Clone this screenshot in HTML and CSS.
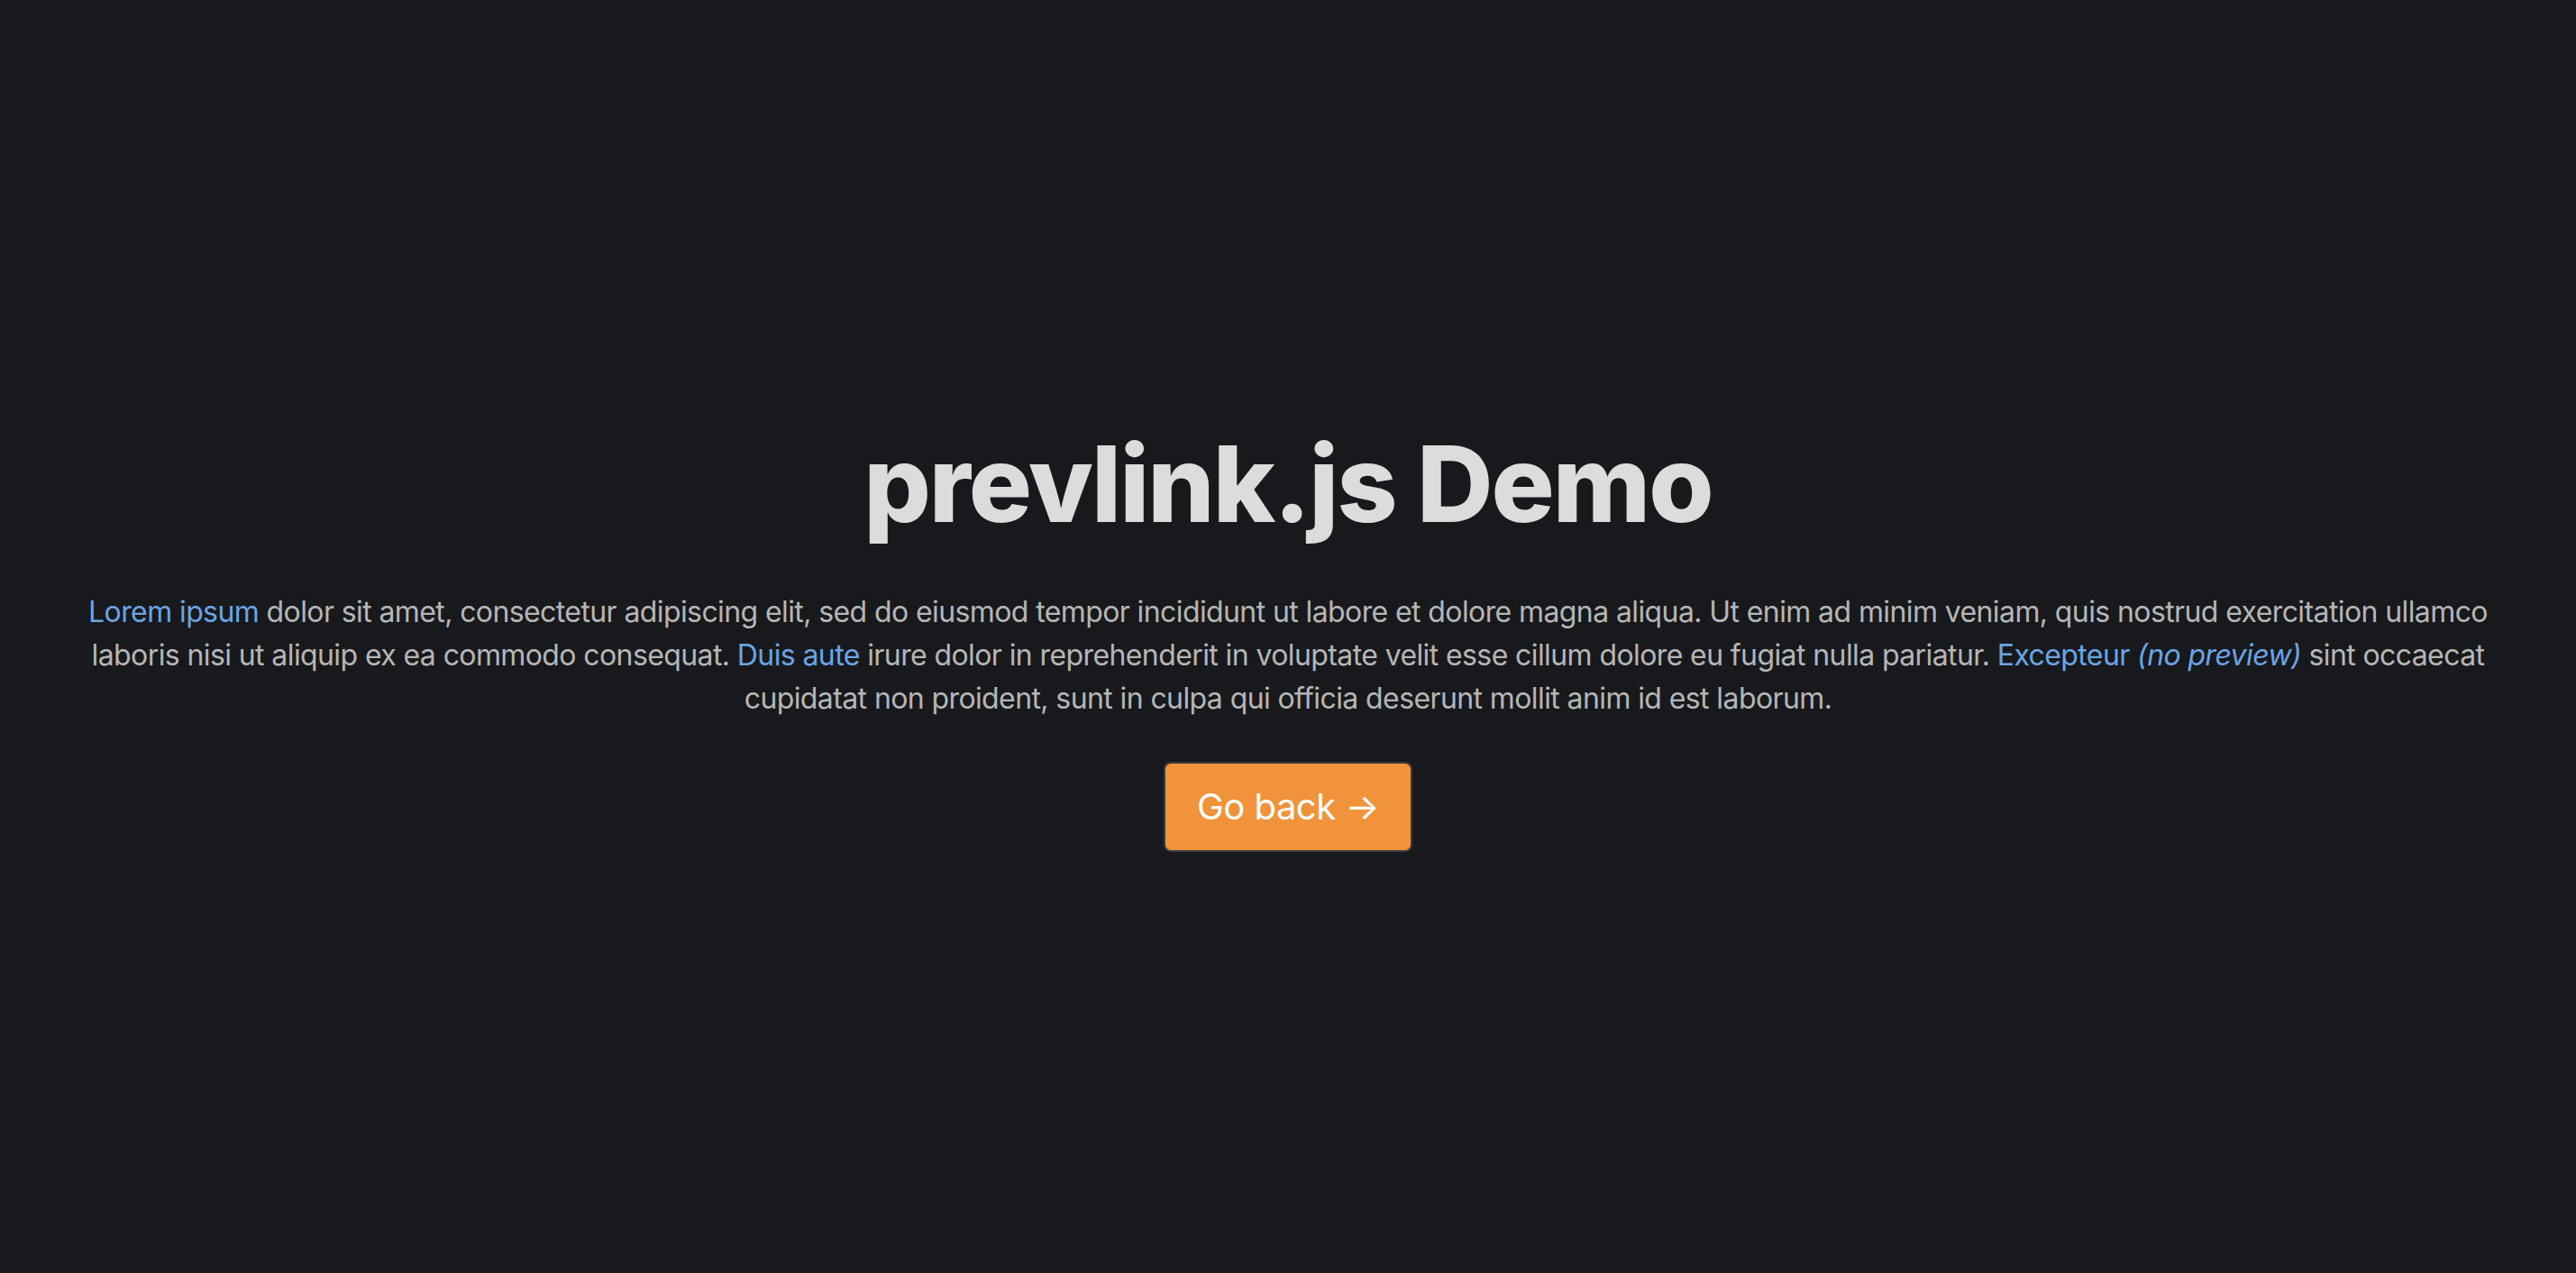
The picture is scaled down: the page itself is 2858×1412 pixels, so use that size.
FILE: index.html
```html
<!DOCTYPE html>
<html lang="en">
<head>
<meta charset="utf-8">
<title>prevlink.js Demo</title>
<link rel="stylesheet" href="styles.css">
</head>
<body>
<main class="page">
  <h1 class="title">prevlink.js Demo</h1>
  <p class="lead"><a class="link" href="#">Lorem ipsum</a> dolor sit amet, consectetur adipiscing elit, sed do eiusmod tempor incididunt ut labore et dolore magna aliqua. Ut enim ad minim veniam, quis nostrud exercitation ullamco laboris nisi ut aliquip ex ea commodo consequat. <a class="link" href="#">Duis aute</a> irure dolor in reprehenderit in voluptate velit esse cillum dolore eu fugiat nulla pariatur. <a class="link" href="#">Excepteur <em>(no preview)</em></a> sint occaecat cupidatat non proident, sunt in culpa qui officia deserunt mollit anim id est laborum.</p>
  <a class="button" href="#">Go back →</a>
</main>
</body>
</html>
```

FILE: styles.css
```css
html, body {
  margin: 0;
  padding: 0;
  height: 100%;
}
body {
  background: #18191d;
  font-family: Inter, "Noto Sans", sans-serif;
  color: #b6b6b6;
}
.page {
  min-height: 100%;
  box-sizing: border-box;
  display: flex;
  flex-direction: column;
  align-items: center;
  justify-content: center;
  padding: 0 80px;
  text-align: center;
}
.title {
  margin: 0 0 48px;
  font-size: 117px;
  line-height: 1.2;
  font-weight: 800;
  color: #dcdcdc;
  letter-spacing: -2px;
}
.lead {
  margin: 0 0 46px;
  font-size: 32px;
  line-height: 48px;
  letter-spacing: -0.6px;
}
.link {
  color: #6aa5e3;
  text-decoration: none;
}
.button {
  display: inline-block;
  background: #f0933a;
  color: #ffffff;
  font-size: 40px;
  line-height: 60px;
  letter-spacing: -0.5px;
  padding: 18px 35px;
  border: 2px solid #3b3b3e;
  border-radius: 8px;
  text-decoration: none;
}
```
